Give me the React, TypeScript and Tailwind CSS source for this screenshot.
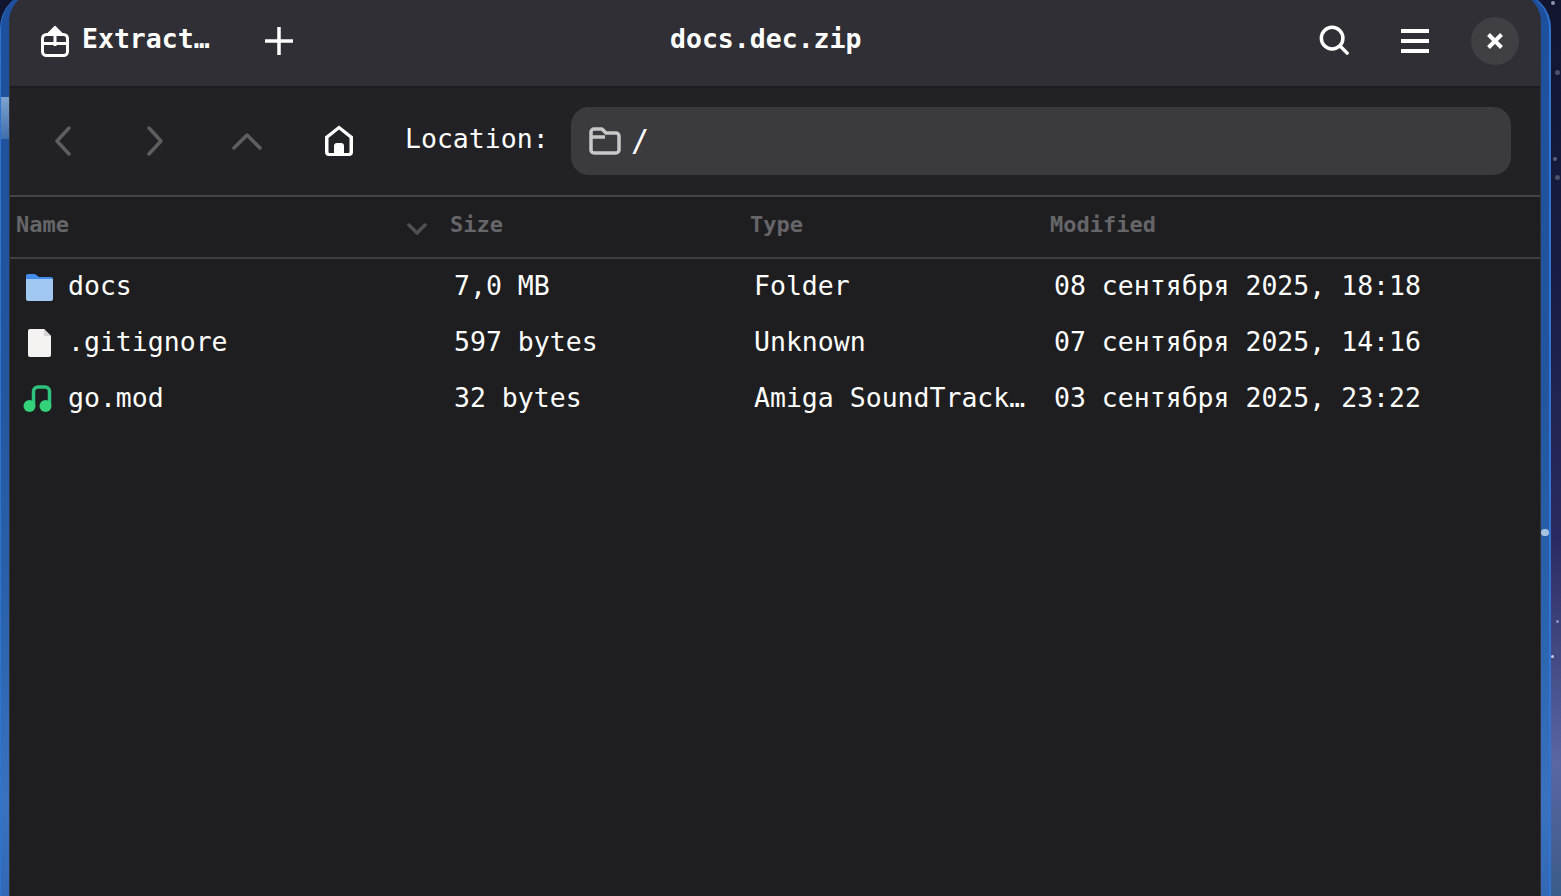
import React from 'react';

const rows = [
  { name: 'docs', size: '7,0 MB', type: 'Folder', modified: '08 сентября 2025, 18:18', icon: 'folder' },
  { name: '.gitignore', size: '597 bytes', type: 'Unknown', modified: '07 сентября 2025, 14:16', icon: 'file' },
  { name: 'go.mod', size: '32 bytes', type: 'Amiga SoundTrack…', modified: '03 сентября 2025, 23:22', icon: 'music' },
];

const ExtractIcon = () => (
  <svg width="28" height="32" viewBox="0 0 28 32" fill="none" stroke="#fff" strokeWidth="3">
    <rect x="1.5" y="9.5" width="25" height="21" rx="4" />
    <path d="M1.5 18.5h25M14 4v17" />
    <path d="M7.5 8l6.5-6.5L20.5 8z" fill="#fff" strokeWidth="1.5" strokeLinejoin="round" />
  </svg>
);

const FileIcon = ({ icon }: { icon: string }) => {
  if (icon === 'folder') {
    return (
      <svg className="ml-[3px]" width="27" height="28" viewBox="0 0 27 28">
        <path d="M0 3a2 2 0 0 1 2-2h7l4 3h12a2 2 0 0 1 2 2v3H0z" fill="#448ceb" />
        <path d="M0 6h27v20a2 2 0 0 1-2 2H2a2 2 0 0 1-2-2z" fill="#a1c8f1" />
      </svg>
    );
  }
  if (icon === 'file') {
    return (
      <svg className="ml-[5px]" width="23" height="28" viewBox="0 0 23 28">
        <path d="M0 2a2 2 0 0 1 2-2h14l7 7v19a2 2 0 0 1-2 2H2a2 2 0 0 1-2-2z" fill="#f4f3f1" />
        <path d="M16 0l7 7h-7z" fill="#d8d6d2" />
      </svg>
    );
  }
  return (
    <svg width="30" height="28" viewBox="0 0 30 28" fill="none">
      <path d="M10.5 20V6.5a4.5 4.5 0 0 1 4.5-4.5h7a4.5 4.5 0 0 1 4.5 4.5V20" stroke="#2ec27e" strokeWidth="3.5" />
      <circle cx="6.5" cy="21" r="6" fill="#33d17a" />
      <circle cx="22.5" cy="21" r="6" fill="#33d17a" />
    </svg>
  );
};

export default function App() {
  return (
    <div className="relative h-[896px] overflow-hidden bg-[linear-gradient(180deg,#11152f_0%,#181c42_30%,#2a2a60_60%,#5a66a2_85%,#3b5c88_100%)] pr-[10px] font-['DejaVu_Sans_Mono',monospace]">
      {/* Wallpaper showing round the window */}
      <span className="absolute left-[1551px] top-[1px] h-[4px] w-[4px] rounded-full bg-[#8f93a8]" />
      <span className="absolute left-[1555px] top-[70px] h-[5px] w-[5px] rounded-full bg-[#4a5068]" />
      <span className="absolute left-[1553px] top-[157px] h-[4px] w-[4px] rounded-full bg-[#5a6078]" />
      <span className="absolute left-[1555px] top-[175px] h-[5px] w-[5px] rounded-full bg-[#4a5068]" />
      <span className="absolute left-[1551px] top-[655px] h-[3px] w-[3px] rounded-full bg-[#c8cce0]" />
      <span className="absolute left-[1556px] top-[620px] h-[3px] w-[3px] rounded-full bg-[#8f93c0]" />

      <div className="relative -mt-[8px] h-[904px] rounded-t-[36px] border-x-2 border-l border-[#2f74d0] bg-[linear-gradient(180deg,#1d4f9c_0%,#23569f_45%,#2c63ae_70%,#3a72c0_90%,#3268b4_100%)] pl-[8px] pr-[8px]">
        <span className="absolute left-0 top-[105px] h-[42px] w-[8px] bg-gradient-to-b from-[#7fa3cc] to-[#3f6fae]" />
        <span className="absolute right-[0px] top-[537px] h-[7px] w-[8px] rounded-full bg-[#a9c4e0]" />

        <div className="flex h-full flex-col overflow-hidden rounded-t-[30px] border-x border-[#343438] bg-[#1e1e20] text-white">
          {/* Header bar */}
          <div className="flex h-[94px] shrink-0 items-center bg-[#2f2f35] pb-[5px] pt-[8px]">
            <div className="ml-[31px]"><ExtractIcon /></div>
            <span className="mb-[3px] ml-[13px] w-[128px] text-[26.5px] font-bold leading-none">Extract…</span>
            <svg className="ml-[55px]" width="28" height="28" viewBox="0 0 28 28" stroke="#fff" strokeWidth="3.5">
              <path d="M0 14h28M14 0v28" />
            </svg>
            <span className="mb-[3px] ml-[377px] w-[192px] text-[26.5px] font-bold leading-none">docs.dec.zip</span>
            <svg className="ml-[457px] mb-[1px]" width="30" height="30" viewBox="0 0 32 32" fill="none" stroke="#fff" strokeWidth="3.7" strokeLinecap="round">
              <circle cx="14" cy="14" r="11.5" />
              <path d="M23 23l7 7" />
            </svg>
            <div className="ml-[52px] flex w-[28px] flex-col gap-[6px]">
              <div className="h-[4px] bg-white" />
              <div className="h-[4px] bg-white" />
              <div className="h-[4px] bg-white" />
            </div>
            <div className="ml-[42px] flex h-[48px] w-[48px] items-center justify-center rounded-full bg-[#403f44]">
              <svg width="16" height="16" viewBox="0 0 16 16" stroke="#fff" strokeWidth="4">
                <path d="M1.5 1.5l13 13M14.5 1.5l-13 13" />
              </svg>
            </div>
          </div>
          {/* Location toolbar */}
          <div className="flex h-[111px] shrink-0 items-center border-y-2 border-b-[#454548] border-t-[#1c1c1f] bg-[#222226] pb-[1px] pr-[29px]">
            <svg className="ml-[44px]" width="18" height="30" viewBox="0 0 18 30" fill="none" stroke="#5e5e61" strokeWidth="3.5" strokeLinecap="round" strokeLinejoin="round">
              <path d="M15 2L3 15l12 13" />
            </svg>
            <svg className="ml-[74px]" width="18" height="30" viewBox="0 0 18 30" fill="none" stroke="#5e5e61" strokeWidth="3.5" strokeLinecap="round" strokeLinejoin="round">
              <path d="M3 2l12 13L3 28" />
            </svg>
            <svg className="ml-[68px]" width="30" height="18" viewBox="0 0 30 18" fill="none" stroke="#5e5e61" strokeWidth="3.5" strokeLinecap="round" strokeLinejoin="round">
              <path d="M2 16L15 3l13 13" />
            </svg>
            <svg className="ml-[62px]" width="30" height="32" viewBox="0 0 30 32" fill="none">
              <path fillRule="evenodd" d="M15 0.5L29 11.5V27a4 4 0 0 1-4 4H5a4 4 0 0 1-4-4V11.5zM15 4.5L4.5 13v14a1 1 0 0 0 1 1H10v-7a3 3 0 0 1 3-3h4a3 3 0 0 1 3 3v7h4.5a1 1 0 0 0 1-1V13z" fill="#fff" />
            </svg>
            <span className="mb-[3px] ml-[51px] w-[144px] text-[26.5px] leading-none">Location:</span>
            <div className="ml-[22px] flex h-[68px] flex-1 items-center rounded-[18px] bg-[#3a3a3f] pl-[18px]">
              <svg width="32" height="28" viewBox="0 0 32 28" fill="none" stroke="#c8c8c8" strokeWidth="3.5" strokeLinejoin="round">
                <path d="M2 5a3 3 0 0 1 3-3h8l4 4h10a3 3 0 0 1 3 3v14a3 3 0 0 1-3 3H5a3 3 0 0 1-3-3zM2 10h14" />
              </svg>
              <span className="ml-[10px] text-[30px] leading-none">/</span>
            </div>
          </div>
          {/* Column headers */}
          <div className="grid h-[62px] shrink-0 grid-cols-[434px_301px_299px_1fr] items-center border-b-2 border-[#3f3f42] pb-[5px] text-[22px] font-bold leading-none text-[#66666a]">
            <div className="flex items-center justify-between pl-[6px] pr-[17px]">
              <span>Name</span>
              <svg className="mt-[8px]" width="20" height="12" viewBox="0 0 20 12" fill="none" stroke="#505053" strokeWidth="3.5" strokeLinecap="round" strokeLinejoin="round">
                <path d="M2 2l8 8 8-8" />
              </svg>
            </div>
            <span className="pl-[6px]">Size</span>
            <span className="pl-[5px]">Type</span>
            <span className="pl-[6px]">Modified</span>
          </div>
          {/* File rows */}
          <div className="text-[26.5px] leading-none">
            {rows.map((row) => (
              <div key={row.name} className="grid h-[56px] grid-cols-[434px_301px_299px_1fr] items-center">
                <div className="flex items-center pl-[13px]">
                  <span className="flex w-[45px] justify-start"><FileIcon icon={row.icon} /></span>
                  <span className="mb-[1px]">{row.name}</span>
                </div>
                <span className="mb-[1px] pl-[10px]">{row.size}</span>
                <span className="mb-[1px] pl-[9px]">{row.type}</span>
                <span className="mb-[1px] whitespace-nowrap pl-[10px]">{row.modified}</span>
              </div>
            ))}
          </div>
        </div>
      </div>
    </div>
  );
}
